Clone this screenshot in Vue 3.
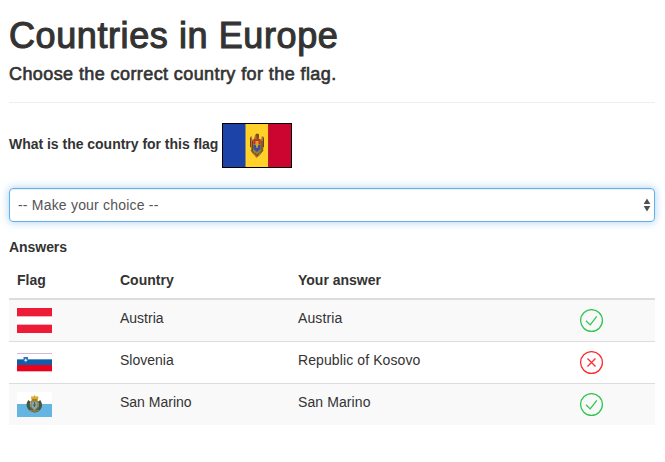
<script setup>
const answers = [
  { flag: 'at', country: 'Austria', answer: 'Austria', correct: true },
  { flag: 'si', country: 'Slovenia', answer: 'Republic of Kosovo', correct: false },
  { flag: 'sm', country: 'San Marino', answer: 'San Marino', correct: true },
]
</script>

<template>
  <main class="page">
    <h1>Countries in Europe</h1>
    <h4>Choose the correct country for the flag.</h4>
    <hr />
    <div class="question">
      <label class="q">What is the country for this flag</label>
      <svg class="quiz-flag" width="70" height="45" viewBox="0 0 70 45">
        <rect width="70" height="45" fill="#000" />
        <rect x="1" y="1" width="23" height="43" fill="#1b43a8" />
        <rect x="23.5" y="1" width="23" height="43" fill="#ffd129" />
        <rect x="46.3" y="1" width="22.7" height="43" fill="#cb0530" />
        <g>
          <path d="M28 14l1.500-1 1 4 1.500-1 1-4 2-2 1.500 2 .5 4 2 1 1-4 2 1v8l-1 6-3 4-1 1-2.500 2-2.500-3-2-2-2-8z" fill="#a87532" />
          <path d="M28.500 15v9M30.500 18v10M40 18v10M41.500 15v9" stroke="#69431c" stroke-width="1" fill="none" />
          <path d="M34 11h3v4l-2 2z" fill="#7a4d1a" />
          <path d="M31.500 16h7v5h-7z" fill="#c9302c" />
          <path d="M31.500 22h7v4l-3.500 3-3.500-3z" fill="#34539a" />
          <path d="M33.500 18h3v3l-1 4h-1l-1-4z" fill="#d8a32a" />
          <path d="M29 27l3 3M41 27l-3 3" stroke="#5d6b35" stroke-width="1.500" />
          <path d="M33 30l2 3 2-3" stroke="#734819" fill="none" />
        </g>
      </svg>
    </div>
    <div class="select" tabindex="0" role="combobox">
      <span>-- Make your choice --</span>
      <svg width="8" height="14" viewBox="0 0 8 14">
        <path d="M4 0.500L7.300 6H.7zM.7 8h6.600L4 13.500z" fill="#505050" />
      </svg>
    </div>
    <div class="answers-label">Answers</div>
    <div class="table">
      <div class="row head">
        <b>Flag</b><b>Country</b><b>Your answer</b><b></b>
      </div>
      <div v-for="a in answers" :key="a.country" class="row">
        <div class="flag">
          <svg v-if="a.flag === 'at'" width="35" height="25" viewBox="0 0 35 25">
            <rect width="35" height="25" fill="#ed1b36" />
            <rect y="8" width="35" height="9" fill="#f9afb9" />
            <rect y="9" width="35" height="7" fill="#fff" />
          </svg>
          <svg v-else-if="a.flag === 'si'" width="35" height="25" viewBox="0 0 35 25">
            <rect y="3" width="35" height="1" fill="#d2b9d4" />
            <rect y="4" width="35" height="5" fill="#fff" />
            <rect y="9" width="35" height="6" fill="#105eaa" />
            <rect y="9" width="35" height="1" fill="#5b94c6" />
            <rect y="15" width="35" height="6" fill="#ee0019" />
            <rect y="21" width="35" height="1" fill="#dfb7cb" />
            <path d="M6.500 7h4.500v3.500L8.800 13 6.500 10.500z" fill="#3477b5" />
            <path d="M7.300 10.500l1.400-2 1.500 2-1.500 1z" fill="#e7f3fa" />
          </svg>
          <svg v-else width="35" height="25" viewBox="0 0 35 25">
            <rect width="35" height="12" fill="#fff" />
            <rect y="12" width="35" height="13" fill="#65b5e2" />
            <path d="M12.500 9c-3 4-1 9 5 10 6-1 7.500-6 4.500-10" fill="none" stroke="#47563f" stroke-width="3" />
            <path d="M14 9h7v6l-3.500 4-3.500-4z" fill="#7fa5ae" stroke="#8f7837" />
            <path d="M14 5l1-1 1 1 1.500-2L19 5l1-1 1.500 1-.8 4h-6z" fill="#d9aa2b" />
            <path d="M15 8h5M16 13h3M17.500 10v5" stroke="#765824" />
            <path d="M13 18l4.500 1.500L22 18" fill="none" stroke="#a78a4a" />
          </svg>
        </div>
        <div>{{ a.country }}</div>
        <div class="answer">{{ a.answer }}</div>
        <div class="mark">
          <svg width="24" height="24" viewBox="0 0 24 24" fill="none" :stroke="a.correct ? '#2fc552' : '#fb2b32'" stroke-width="1.250">
            <circle cx="11.500" cy="11.500" r="10.900" />
            <path v-if="a.correct" d="M6 11.700l4.200 4.200 6.600-8.600" />
            <path v-else d="M7.500 7.500l8 8M15.500 7.500l-8 8" />
          </svg>
        </div>
      </div>
    </div>
  </main>
</template>

<style>
body { margin: 0; background: #fff; }
</style>

<style scoped>
.page {
  box-sizing: border-box;
  width: 665px;
  height: 462px;
  padding: 16px 10px 0 9px;
  overflow: hidden;
  font: 14px/20px "Liberation Sans", Arial, sans-serif;
  color: #333;
}
h1, h4 { margin: 0; font-weight: 400; white-space: nowrap; }
h1 { font-size: 36px; line-height: 40px; letter-spacing: 0.59px; -webkit-text-stroke: 1.1px #333; }
h4 { margin-top: 8px; font-size: 18px; line-height: 20px; letter-spacing: 0.41px; -webkit-text-stroke: 0.65px #333; }
hr { height: 1px; margin: 18px 0 20px; border: 0; background: #eee; }
.question { display: flex; align-items: center; height: 45px; }
.q { width: 213px; padding-bottom: 3px; font-weight: 700; letter-spacing: -0.02px; white-space: nowrap; }
.quiz-flag { display: block; flex: none; }
.select {
  box-sizing: border-box;
  display: flex;
  align-items: center;
  justify-content: space-between;
  height: 34px;
  margin-top: 20px;
  padding: 0 3px 0 8px;
  border: 1px solid #66afe9;
  border-radius: 4px;
  outline: 0;
  color: #555;
  letter-spacing: 0.2px;
  box-shadow: inset 0 1px 1px rgba(0, 0, 0, 0.075), 0 0 8px rgba(102, 175, 233, 0.6);
}
.answers-label { height: 20px; margin-top: 15px; font-weight: 700; letter-spacing: -0.05px; }
.table { margin-top: 5px; }
.row {
  box-sizing: border-box;
  display: grid;
  grid-template-columns: 103px 178px 282px 83px;
  height: 42px;
  padding-top: 8px;
  border-top: 1px solid #ddd;
}
.row > * { padding-left: 8px; }
.row.head { height: 36px; border: 0; }
.row.head + .row { height: 43px; border-top-width: 2px; }
.row:nth-child(even) { background: #f9f9f9; }
.row svg { display: block; }
.row > .mark { padding-top: 1px; }
.answer { letter-spacing: 0.1px; }
</style>
